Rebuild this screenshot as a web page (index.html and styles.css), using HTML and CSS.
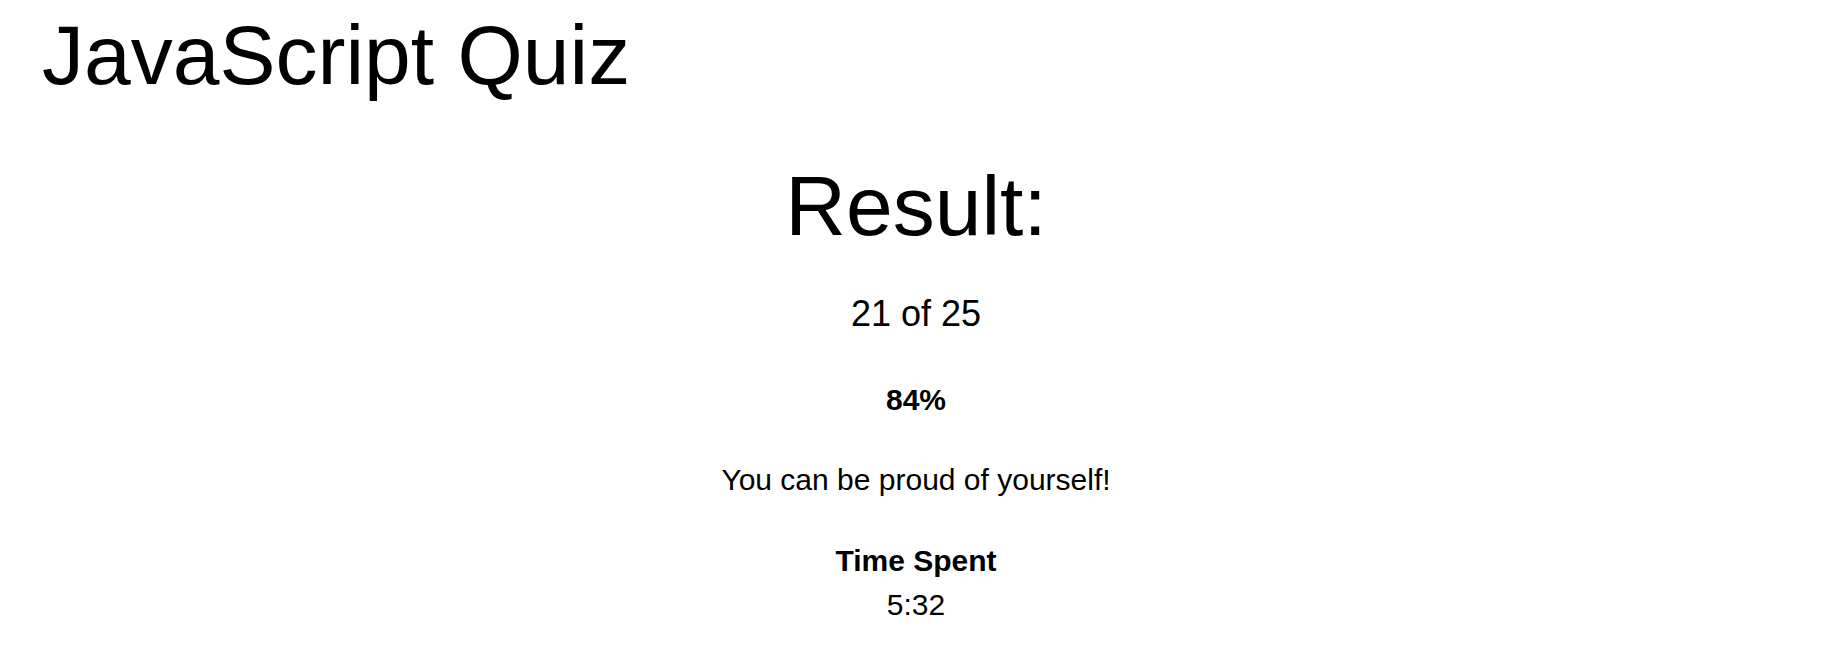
FILE: index.html
```html
<!DOCTYPE html>
<html lang="en">
<head>
<meta charset="utf-8">
<title>JavaScript Quiz</title>
<link rel="stylesheet" href="styles.css">
</head>
<body>
<header class="app-header">
  <h1 class="app-title">JavaScript Quiz</h1>
</header>
<main class="result">
  <h2 class="result-title">Result:</h2>
  <p class="result-score">21 of 25</p>
  <p class="result-percent">84%</p>
  <p class="result-message">You can be proud of yourself!</p>
  <div class="result-time">
    <p class="time-label">Time Spent</p>
    <p class="time-value">5:32</p>
  </div>
</main>
</body>
</html>
```

FILE: styles.css
```css
html, body {
  margin: 0;
  padding: 0;
  background: #ffffff;
  color: #000000;
  font-family: "Liberation Sans", Arial, sans-serif;
}

.app-header {
  padding: 13px 0 0 42px;
}

.app-title {
  margin: 0;
  font-size: 84px;
  font-weight: normal;
  line-height: 1;
}

.result {
  display: flex;
  flex-direction: column;
  align-items: center;
  text-align: center;
}

.result p {
  margin: 0;
  line-height: 1;
}

.result-title {
  margin: 67px 0 0;
  font-size: 84px;
  font-weight: normal;
  line-height: 1;
}

.result .result-score {
  margin-top: 48px;
  font-size: 36px;
}

.result .result-percent {
  margin-top: 53px;
  font-size: 30px;
  font-weight: bold;
}

.result .result-message {
  margin-top: 50px;
  font-size: 30px;
}

.result-time {
  margin-top: 51px;
  display: flex;
  flex-direction: column;
  align-items: center;
  gap: 14px;
}

.time-label {
  font-size: 30px;
  font-weight: bold;
}

.time-value {
  font-size: 30px;
}
```
